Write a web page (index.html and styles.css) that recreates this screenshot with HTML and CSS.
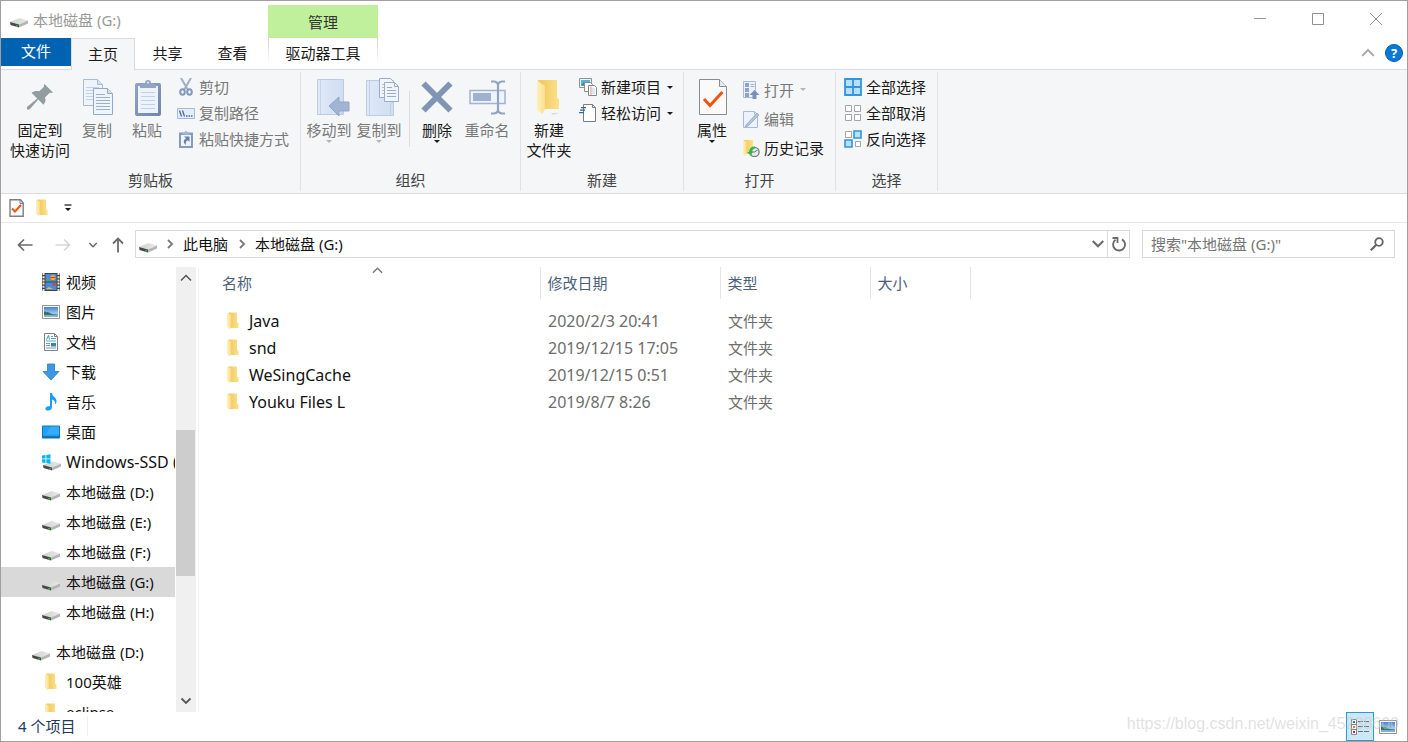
FILE: index.html
```html
<!DOCTYPE html>
<html lang="zh-CN">
<head>
<meta charset="utf-8">
<title>本地磁盘 (G:)</title>
<link rel="stylesheet" href="styles.css">
</head>
<body>
<svg class="defs" width="0" height="0" aria-hidden="true">
  <defs>
    <linearGradient id="gFolder" x1="0" x2="1"><stop offset="0" stop-color="#efc75c"/><stop offset="1" stop-color="#fde08a"/></linearGradient>
    <linearGradient id="gFlap" x1="0" x2="1"><stop offset="0" stop-color="#fff0ba"/><stop offset="1" stop-color="#fbdf90"/></linearGradient>
    <linearGradient id="gDrive" x1="0" x2="1"><stop offset="0" stop-color="#cfcfcf"/><stop offset="1" stop-color="#e9e9ea"/></linearGradient>
    <linearGradient id="gBlue" x1="0" x2="1"><stop offset="0" stop-color="#dfe9f8"/><stop offset="1" stop-color="#d0def2"/></linearGradient>
    <linearGradient id="gSky" x1="0" x2="0" y1="0" y2="1"><stop offset="0" stop-color="#3f83d8"/><stop offset="1" stop-color="#d8ecfa"/></linearGradient>
    <linearGradient id="gClip" x1="0" x2="1" y1="0" y2="1"><stop offset="0" stop-color="#8ea4ca"/><stop offset="1" stop-color="#7085ad"/></linearGradient>
  </defs>
  <symbol id="drive" viewBox="0 0 18 18">
    <path d="M0 10 9.500 6l8.500 2.500-9 4z" fill="url(#gDrive)"/>
    <path d="M9 12.500l9-4v3l-9 4z" fill="#b4b4b7"/>
    <path d="M0 10l9 2.500v3L.5 13z" fill="#474747"/>
    <path d="M6 13.600l2 .6" stroke="#2fc23a" stroke-width="1.400"/>
  </symbol>
  <symbol id="windrive" viewBox="0 0 20 18">
    <path d="M2 12l9.500-3.500L20 10.500l-9 4z" fill="url(#gDrive)"/>
    <path d="M11 14.500l9-4v3l-9 4z" fill="#b4b4b7"/>
    <path d="M2 12l9 2.500v3L2.500 15z" fill="#474747"/>
    <path d="M8 15.600l2 .6" stroke="#2fc23a" stroke-width="1.400"/>
    <path d="M1 2.500l3.500-.5v3.500H1zM5.300 1.900 9.500 1.300v4.200H5.300zM1 6.300h3.500V10L1 9.500zM5.300 6.300h4.200v4.400l-4.200-.6z" fill="#08b5ef"/>
  </symbol>
  <symbol id="folder" viewBox="0 0 14 18">
    <path d="M2.500.5h8.500v10l1.500 1v4.500H3z" fill="url(#gFolder)"/>
    <path d="M1 .5l3.800 2.200v12.500l-1.300 2L1 14.500z" fill="url(#gFlap)"/>
  </symbol>
  <symbol id="bigfolder" viewBox="0 0 26 36">
    <path d="M15 34h8l-6 2z" fill="#dcdcdc"/>
    <path d="M2 1h19v18l2 1.500V30H3z" fill="url(#gFolder)"/>
    <path d="M1 1.500 9 7v23l-2.500 5L1 31z" fill="url(#gFlap)"/>
  </symbol>
  <symbol id="check" viewBox="0 0 28 36">
    <path d="M.5.5h20l7 7v28H.5z" fill="#fafafa" stroke="#8b8b8b"/>
    <path d="M20.500.5v7h7" fill="#e9e9e9" stroke="#8b8b8b"/>
    <path d="M5 20l6 6.500L23.500 13" fill="none" stroke="#f0550e" stroke-width="3"/>
  </symbol>
  <symbol id="chk" viewBox="0 0 16 18">
    <path d="M1 .8h10.500L14.200 4v13.200H1z" fill="#fafafa" stroke="#7e7e7e" stroke-width="1.400"/>
    <path d="M11 1v3.500h3" fill="none" stroke="#7e7e7e"/>
    <path d="M3 9.500l3 3 6-6.500" fill="none" stroke="#f0550e" stroke-width="2"/>
  </symbol>
  <symbol id="pin" viewBox="0 0 26 26">
    <path d="M17.500 0l8.500 8.500-2.500.5-.8-.3L18 13.500c1 3 .3 5-1.500 7.200l-5.300-5.300L2.500 25.500H0V23l10.200-8.600L4.500 8.800c2.500-2 5-2.300 7.800-1.500L17 2.800l-.3-1z" fill="#929da2"/>
  </symbol>
  <symbol id="copy" viewBox="0 0 32 36">
    <g stroke="#a9bad7" fill="#eef4fc">
      <path d="M1.500.5h14l5 5v21h-19z"/><path d="M15.500.5v5h5" fill="#d5e1f3"/>
      <path d="M4 8.500h13M4 11.500h13M4 14.500h13M4 17.500h13M4 20.500h13" stroke="#c3d1e7"/>
      <path d="M11.500 9.500h14l5 5v21h-19z" stroke="#93a8cb"/><path d="M25.500 9.500v5h5" fill="#d5e1f3" stroke="#93a8cb"/>
      <path d="M14 15.500h9M14 18.500h14M14 21.500h14M14 24.500h14M14 27.500h14M14 30.500h14" stroke="#9aafd0"/>
    </g>
  </symbol>
  <symbol id="paste" viewBox="0 0 28 37">
    <rect x="1" y="4" width="26" height="33" rx="2" fill="url(#gClip)"/>
    <path d="M4 7h20v27H4z" fill="#edf3fc"/>
    <path d="M7 13.500h14M7 17.500h14M7 21.500h14M7 25.500h14M7 29.500h14" stroke="#bfcfe8"/>
    <path d="M6 9V6l4-2h1a3 3 0 0 1 6 0h1l4 2v3z" fill="#94a5c4"/><circle cx="14" cy="3.500" r="1" fill="#e8eef8"/>
  </symbol>
  <symbol id="cut" viewBox="0 0 18 18">
    <path d="M4 0l7 12M14 0 7 12" stroke="#9eafcb" stroke-width="2"/>
    <ellipse cx="5.500" cy="14" rx="2.300" ry="2.800" fill="none" stroke="#8398bd" stroke-width="2"/>
    <ellipse cx="12.500" cy="14" rx="2.300" ry="2.800" fill="none" stroke="#8398bd" stroke-width="2"/>
  </symbol>
  <symbol id="path" viewBox="0 0 18 18">
    <path d="M.5 4.500h17v10H.5z" fill="#e4edfa" stroke="#a5b9dc"/>
    <path d="M2.500 6.500l2 6M5.500 6.500l2 6" stroke="#4b689b" stroke-width="1.300"/>
    <path d="M9 12h1.500M11.500 12H13M14 12h1.500" stroke="#4b689b" stroke-width="1.500"/>
  </symbol>
  <symbol id="shortcut" viewBox="0 0 18 18">
    <path d="M2 2.500h14V18H2z" fill="#849abf"/><path d="M4 5h10v11H4z" fill="#f1f6fd"/>
    <path d="M5.500 4.500V2.500H7.500a1.500 1.500 0 0 1 3 0h2v2z" fill="#a4b5d2"/>
    <path d="M7 6.500h5.500V12l-1.800-1.800C9 11 8.500 12.500 9 15 6 13 6 10 9 8.500z" fill="#6680ad"/>
  </symbol>
  <symbol id="moveto" viewBox="0 0 34 37">
    <path d="M1.500.5h26v35h-26z" fill="url(#gBlue)" stroke="#bccbe3"/><path d="M4.500 1v34" stroke="#c6d5ec"/>
    <path d="M27.500 22v10c0 2-3 2-3 4" fill="none" stroke="#bccbe3"/>
    <path d="M13 27l10-9v5h10v9H23v5z" fill="#a2b4d3" stroke="#92a5c7"/>
  </symbol>
  <symbol id="copyto" viewBox="0 0 34 39">
    <path d="M.5 2.500h27v35h-27z" fill="url(#gBlue)" stroke="#bccbe3"/><path d="M3.500 3v34M24.500 37V26l3-2" fill="none" stroke="#c1d0e8"/>
    <g fill="#f0f5fd" stroke="#9aaccb"><path d="M13.500.5h11l3 3v16h-14z"/><path d="M16 6.500h9M16 9.500h9M16 12.500h9M16 15.500h9" stroke="#adbfdd"/>
    <path d="M18.500 4.500h10l4 4v15h-14z"/><path d="M28.500 4.500v4h4" fill="none"/><path d="M21 9.500h5M21 12.500h9M21 15.500h9M21 18.500h9"/></g>
  </symbol>
  <symbol id="delete" viewBox="0 0 32 32"><path d="M2.500 2.500l27 27M29.500 2.500l-27 27" stroke="#8194b6" stroke-width="6"/></symbol>
  <symbol id="rename" viewBox="0 0 37 35">
    <path d="M1 10.500h35v13H1z" fill="#eef4fd" stroke="#a1b3d2" stroke-width="1.500"/><path d="M4 13h18v8H4z" fill="#a0b1ce"/>
    <path d="M29 3v29M22 1.500h3q4 .5 4 4 0-3.500 4-4h3M22 33.500h3q4-.5 4-4 0 3.500 4 4h3" fill="none" stroke="#91a4c5" stroke-width="2.200"/>
  </symbol>
  <symbol id="newitem" viewBox="0 0 18 18">
    <path d="M.5.5h12v9H.5z" fill="#e9f7fc" stroke="#87969d"/><path d="M2 2h9v6H2z" fill="#5bb1da"/><path d="M2 7l3-3 3 4z" fill="#4b8a85"/>
    <path d="M5.500 4.500h6l2 2v7h-8z" fill="#fff" stroke="#8b8b8b"/>
    <path d="M9.500 7.500h6l2 2v8h-8z" fill="#fff" stroke="#858585"/><path d="M11 11h5M11 13h5M11 15h5" stroke="#b8ceea"/><path d="M12 8v9" stroke="#f2a9a2"/>
  </symbol>
  <symbol id="easy" viewBox="0 0 18 18">
    <path d="M4.500.5h9l3 3v14h-12z" fill="#fff" stroke="#7d7d7d"/><path d="M13.500.5v3h3" fill="none" stroke="#7d7d7d"/>
    <path d="M2 3.700h5M1 6.200h5M0 8.700h5" stroke="#276ca8" stroke-width="1.200"/>
  </symbol>
  <symbol id="open" viewBox="0 0 18 18">
    <path d="M1.500.5h12v16h-12z" fill="#eaf1fc" stroke="#a8bada"/><path d="M3 2h4v4H3zM3 7h4v4H3zM3 12h4v4H3z" fill="#8ea3c7"/><path d="M8.500 3.500h4M8.500 5.500h4" stroke="#a6b7d4"/>
    <path d="M12.500 9l5 5h-3v4h-4v-4h-3z" fill="#7990b9"/>
  </symbol>
  <symbol id="edit" viewBox="0 0 18 18">
    <path d="M1.500 1.500h11l3 3v13h-14z" fill="#ecf3fd" stroke="#a9bad8"/><path d="M12.500 1.500v3h3" fill="none" stroke="#a9bad8"/>
    <path d="M4 15 15 3l2 2L6 16l-3 1z" fill="#b4c4de" stroke="#899fc4" stroke-width=".7"/>
  </symbol>
  <symbol id="history" viewBox="0 0 18 18">
    <path d="M2 1h9v14H3z" fill="url(#gFolder)"/><path d="M1 1l3.500 2v11L3 17l-2-2z" fill="url(#gFlap)"/>
    <circle cx="12.500" cy="13" r="4.600" fill="#e6e9ea" stroke="#747b80" stroke-width="1.300"/><path d="M12.500 13l3-2M12.500 13h-3" stroke="#636c71"/>
    <path d="M13 7.500q-6 0-5.500 5.500H5l4 4 1.500-4q-1-2.500 2.500-3.500z" fill="#33b54a"/>
  </symbol>
  <symbol id="selall" viewBox="0 0 18 18"><path d="M1 1h16v16H1zM9 1v16M1 9h16" fill="#b6e0fc" stroke="#3295e0" stroke-width="1.800"/></symbol>
  <symbol id="selnone" viewBox="0 0 18 18"><path d="M1.500 1.500h6v6h-6zM10.500 1.500h6v6h-6zM1.500 10.500h6v6h-6zM10.500 10.500h6v6h-6z" fill="#fff" stroke="#a5a5a5"/></symbol>
  <symbol id="selinv" viewBox="0 0 18 18"><path d="M1.500 1.500h6v6h-6zM11.500 11.500h5v5h-5z" fill="#fff" stroke="#a5a5a5"/><path d="M10 1h7v7h-7zM1 10h7v7H1z" fill="#b6e0fc" stroke="#3295e0" stroke-width="1.600"/></symbol>
  <symbol id="video" viewBox="0 0 18 18">
    <path d="M0 0h18v18H0z" fill="#444"/><path d="M1.500 0v18M16.500 0v18" stroke="#e8e8e8" stroke-width="2" stroke-dasharray="2 1.200"/>
    <path d="M3.500 1h11v7.500h-11zM3.500 9.500h11V17h-11z" fill="#4c88dc"/><circle cx="11" cy="4.500" r="2.600" fill="#efb125"/><path d="M8.500 4.500h5" stroke="#c83d28"/><circle cx="6" cy="6.500" r="1.500" fill="#5da543"/><circle cx="12" cy="11.500" r="1.800" fill="#d64a2e"/><path d="M4 16l3-2 4 2z" fill="#e8bd31"/>
  </symbol>
  <symbol id="picture" viewBox="0 0 18 18">
    <path d="M.5 2.500h17v13H.5z" fill="#fff" stroke="#959595"/><path d="M2 4h14v10H2z" fill="url(#gSky)"/><path d="M2 8.500q5 0 8 2.500l6 .5v1H2z" fill="#3c725b"/><path d="M2 12h14v2H2z" fill="#7fb2d6"/>
  </symbol>
  <symbol id="doc" viewBox="0 0 18 18">
    <path d="M2.500.5h10l3 3v14h-13z" fill="#fff" stroke="#828282"/><path d="M12.500.5v3h3" fill="none" stroke="#828282"/>
    <path d="M4.500 6.500l2-4 1 4" fill="none" stroke="#2e9ad0"/><path d="M9 3.500h2M9 5.500h5M4 8h10M4 10.500h4M4 12.500h4M4 15h10" stroke="#57a6ce"/><path d="M9 10h5v3.500H9z" fill="#427f9f"/>
  </symbol>
  <symbol id="down" viewBox="0 0 18 18"><path d="M5.500 1h7v7.500H17L9 17 1 8.500h4.500z" fill="#3c97e5" stroke="#2978bd" stroke-width=".8"/></symbol>
  <symbol id="music" viewBox="0 0 18 18"><path d="M8 0h2c.3 4 4.500 4 4.500 8 0 1.500-.5 2.700-1.500 3.500.5-3-.5-4.200-3-5V14c0 2-1.500 3.500-3.800 3.500-4.200 0-3.700-5 1.800-4.300z" fill="#16a0f5"/></symbol>
  <symbol id="desktop" viewBox="0 0 18 18"><path d="M.5 3h17v12H.5z" fill="#1ea2fb" stroke="#1673b1"/><path d="M9 3.500h8v8H3z" fill="#46b3fc" opacity=".6"/><path d="M1 14h16" stroke="#0f588e" stroke-width="1.200"/></symbol>
  <symbol id="details" viewBox="0 0 18 16">
    <path d="M.5.5h5v15h-5zM.5 5.500h5M.5 10.500h5" fill="#fff" stroke="#858585"/><path d="M2 3h2" stroke="#33739e" stroke-width="2"/><path d="M2 8h2" stroke="#e07b34" stroke-width="2"/><path d="M2 13h2" stroke="#bf2c1c" stroke-width="2"/>
    <path d="M7 2.500h5M13 2.500h5M7 7.500h5M13 7.500h5M7 12.500h5M13 12.500h5" stroke="#707070"/>
  </symbol>
  <symbol id="chevdown" viewBox="0 0 12 12"><path d="M1.500 3.500 6 8l4.500-4.500" fill="none" stroke="currentColor" stroke-width="1.800"/></symbol>
  <symbol id="chevup" viewBox="0 0 12 12"><path d="M1 8.500l5-5 5 5" fill="none" stroke="currentColor" stroke-width="1.500"/></symbol>
  <symbol id="chevright" viewBox="0 0 12 12"><path d="M4 2l4 4-4 4" fill="none" stroke="currentColor" stroke-width="1.800"/></symbol>
  <symbol id="arrow" viewBox="0 0 16 14"><path d="M15.500 7H1.500M7 1.500 1.500 7 7 12.500" fill="none" stroke="currentColor" stroke-width="1.700"/></symbol>
</svg>

<div class="window">
  <header class="titlebar">
    <div class="caption"><svg class="i18 low"><use href="#drive"/></svg><h1 class="caption-text">本地磁盘 (G:)</h1></div>
    <div class="context">管理</div>
    <div class="controls">
      <button class="control" aria-label="最小化"><svg width="14" height="14"><path d="M1 6.500h12" stroke="#999"/></svg></button>
      <button class="control" aria-label="最大化"><svg width="14" height="14"><path d="M1.500 1.500h11v11h-11z" fill="none" stroke="#8f8f8f"/></svg></button>
      <button class="control" aria-label="关闭"><svg width="14" height="14"><path d="M1 1l12 12M13 1 1 13" stroke="#8f8f8f"/></svg></button>
    </div>
  </header>
  <nav class="tabs">
    <button class="tab tab-file">文件</button>
    <button class="tab tab-active">主页</button>
    <button class="tab">共享</button>
    <button class="tab">查看</button>
    <button class="tab tab-tools">驱动器工具</button>
    <div class="tabs-end">
      <button class="plain gray" aria-label="折叠功能区"><svg class="i14"><use href="#chevup"/></svg></button>
      <button class="help" aria-label="帮助">?</button>
    </div>
  </nav>

  <section class="ribbon">
    <div class="group g-clip">
      <div class="tools">
        <button class="big w-pin"><span class="pic"><svg width="26" height="26"><use href="#pin"/></svg></span>固定到<br>快速访问</button>
        <button class="big w-two off"><span class="pic pic-right"><svg width="32" height="36"><use href="#copy"/></svg></span>复制</button>
        <button class="big w-two off"><span class="pic pic-right"><svg width="28" height="37"><use href="#paste"/></svg></span>粘贴</button>
        <div class="stack">
          <button class="small off"><svg class="i18"><use href="#cut"/></svg>剪切</button>
          <button class="small off"><svg class="i18"><use href="#path"/></svg>复制路径</button>
          <button class="small off"><svg class="i18"><use href="#shortcut"/></svg>粘贴快捷方式</button>
        </div>
      </div>
      <h2 class="group-name">剪贴板</h2>
    </div>
    <div class="group g-org">
      <div class="tools">
        <button class="big w-three off"><span class="pic pic-far"><svg width="34" height="37"><use href="#moveto"/></svg></span>移动到<i class="caret"></i></button>
        <button class="big w-three off"><span class="pic pic-far"><svg width="34" height="39"><use href="#copyto"/></svg></span>复制到<i class="caret"></i></button>
        <span class="rule"></span>
        <button class="big w-two"><span class="pic"><svg width="32" height="32"><use href="#delete"/></svg></span>删除<i class="caret"></i></button>
        <button class="big w-three off"><span class="pic"><svg width="37" height="35"><use href="#rename"/></svg></span>重命名</button>
      </div>
      <h2 class="group-name">组织</h2>
    </div>
    <div class="group g-new">
      <div class="tools">
        <button class="big w-three"><span class="pic"><svg width="26" height="36"><use href="#bigfolder"/></svg></span>新建<br>文件夹</button>
        <div class="stack">
          <button class="small"><svg class="i18"><use href="#newitem"/></svg>新建项目<i class="caret"></i></button>
          <button class="small"><svg class="i18"><use href="#easy"/></svg>轻松访问<i class="caret"></i></button>
        </div>
      </div>
      <h2 class="group-name">新建</h2>
    </div>
    <div class="group g-open">
      <div class="tools">
        <button class="big w-two"><span class="pic pic-right"><svg width="28" height="36"><use href="#check"/></svg></span>属性<i class="caret"></i></button>
        <div class="stack stack-loose">
          <button class="small off"><svg class="i18"><use href="#open"/></svg>打开<i class="caret"></i></button>
          <button class="small off"><svg class="i18"><use href="#edit"/></svg>编辑</button>
          <button class="small"><svg class="i18"><use href="#history"/></svg>历史记录</button>
        </div>
      </div>
      <h2 class="group-name">打开</h2>
    </div>
    <div class="group g-select">
      <div class="tools">
        <div class="stack">
          <button class="small"><svg class="i18"><use href="#selall"/></svg>全部选择</button>
          <button class="small"><svg class="i18"><use href="#selnone"/></svg>全部取消</button>
          <button class="small"><svg class="i18"><use href="#selinv"/></svg>反向选择</button>
        </div>
      </div>
      <h2 class="group-name">选择</h2>
    </div>
  </section>

  <div class="quick">
    <button class="plain" aria-label="属性"><svg width="16" height="18"><use href="#chk"/></svg></button>
    <button class="plain" aria-label="新建文件夹"><svg width="14" height="18"><use href="#folder"/></svg></button>
    <button class="plain" aria-label="自定义快速访问工具栏"><svg width="8" height="8"><path d="M.5 1h7" stroke="#111" stroke-width="1.200"/><path d="M1 4h6L4 7z" fill="#111"/></svg></button>
  </div>

  <div class="address-row">
    <div class="history">
      <button class="plain dark" aria-label="后退"><svg width="16" height="14"><use href="#arrow"/></svg></button>
      <button class="plain pale flip" aria-label="前进"><svg width="16" height="14"><use href="#arrow"/></svg></button>
      <button class="plain dark" aria-label="最近位置"><svg width="10" height="10"><use href="#chevdown"/></svg></button>
      <button class="plain dark" aria-label="上移"><svg width="12" height="16" viewBox="0 0 12 16"><path d="M6 15.500V1.500M1 6.500l5-5 5 5" fill="none" stroke="currentColor" stroke-width="1.800"/></svg></button>
    </div>
    <div class="address">
      <svg class="i18 low"><use href="#drive"/></svg>
      <svg class="i12 sep"><use href="#chevright"/></svg>
      <a class="crumb" href="#pc">此电脑</a>
      <svg class="i12 sep"><use href="#chevright"/></svg>
      <a class="crumb" href="#g">本地磁盘 (G:)</a>
      <div class="address-end">
        <button class="plain dark drop" aria-label="展开"><svg class="i14"><use href="#chevdown"/></svg></button>
        <button class="plain dark refresh" aria-label="刷新"><svg width="16" height="16" viewBox="0 0 16 16"><path d="M11 3.300a6 6 0 1 1-6.500.4" fill="none" stroke="currentColor" stroke-width="1.900"/><path d="M1.500 2h5v5" fill="none" stroke="currentColor" stroke-width="1.800"/></svg></button>
      </div>
    </div>
    <div class="search">
      <input class="search-input" type="text" aria-label="搜索" placeholder="搜索&quot;本地磁盘 (G:)&quot;">
      <svg width="14" height="14" viewBox="0 0 14 14"><circle cx="9" cy="5" r="3.800" fill="none" stroke="#666" stroke-width="1.800"/><path d="M6.300 7.700.8 13.200" stroke="#666" stroke-width="2.200"/></svg>
    </div>
  </div>

  <main class="main">
    <nav class="tree">
      <a class="node" href="#v"><svg class="i18"><use href="#video"/></svg>视频</a>
      <a class="node" href="#p"><svg class="i18"><use href="#picture"/></svg>图片</a>
      <a class="node" href="#d"><svg class="i18"><use href="#doc"/></svg>文档</a>
      <a class="node" href="#w"><svg class="i18"><use href="#down"/></svg>下载</a>
      <a class="node" href="#m"><svg class="i18"><use href="#music"/></svg>音乐</a>
      <a class="node" href="#t"><svg class="i18"><use href="#desktop"/></svg>桌面</a>
      <a class="node node-latin" href="#c"><svg width="20" height="18"><use href="#windrive"/></svg>Windows-SSD (C:)</a>
      <a class="node" href="#dd"><svg class="i18 low"><use href="#drive"/></svg>本地磁盘 (D:)</a>
      <a class="node" href="#e"><svg class="i18 low"><use href="#drive"/></svg>本地磁盘 (E:)</a>
      <a class="node" href="#f"><svg class="i18 low"><use href="#drive"/></svg>本地磁盘 (F:)</a>
      <a class="node node-current" href="#g"><svg class="i18 low"><use href="#drive"/></svg>本地磁盘 (G:)</a>
      <a class="node" href="#h"><svg class="i18 low"><use href="#drive"/></svg>本地磁盘 (H:)</a>
      <a class="node node-root" href="#d2"><svg class="i18 low"><use href="#drive"/></svg>本地磁盘 (D:)</a>
      <a class="node" href="#100"><svg class="i18"><use href="#folder"/></svg>100英雄</a>
      <a class="node" href="#ec"><svg class="i18"><use href="#folder"/></svg>eclipse</a>
    </nav>
    <div class="scroll">
      <svg class="i12"><use href="#chevup"/></svg>
      <div class="track"><div class="thumb"></div></div>
      <svg class="i12"><use href="#chevdown"/></svg>
    </div>
    <div class="files">
      <table class="list">
        <colgroup><col class="c-name"><col class="c-date"><col class="c-type"><col class="c-size"><col></colgroup>
        <thead><tr>
          <th>名称<svg class="sort" width="11" height="11"><use href="#chevup"/></svg></th><th>修改日期</th><th>类型</th><th>大小</th><td></td>
        </tr></thead>
        <tbody>
          <tr><td><span class="file"><svg width="14" height="18"><use href="#folder"/></svg>Java</span></td><td class="date">2020/2/3 20:41</td><td>文件夹</td><td></td><td></td></tr>
          <tr><td><span class="file"><svg width="14" height="18"><use href="#folder"/></svg>snd</span></td><td class="date">2019/12/15 17:05</td><td>文件夹</td><td></td><td></td></tr>
          <tr><td><span class="file"><svg width="14" height="18"><use href="#folder"/></svg>WeSingCache</span></td><td class="date">2019/12/15 0:51</td><td>文件夹</td><td></td><td></td></tr>
          <tr><td><span class="file"><svg width="14" height="18"><use href="#folder"/></svg>Youku Files L</span></td><td class="date">2019/8/7 8:26</td><td>文件夹</td><td></td><td></td></tr>
        </tbody>
      </table>
    </div>
  </main>

  <footer class="status">
    <span class="count">4 个项目</span>
    <div class="views">
      <button class="view view-on" aria-label="详细信息"><svg width="18" height="16"><use href="#details"/></svg></button>
      <button class="view" aria-label="大图标"><svg class="i18"><use href="#picture"/></svg></button>
    </div>
    <span class="mark">https://blog.csdn.net/weixin_45238600</span>
  </footer>
</div>
</body>
</html>
```

FILE: styles.css
```css
* { box-sizing: border-box; }
body {
  margin: 0;
  background: #fff;
  color: #1a1a1a;
  font: 15px/20px "Noto Sans", "Noto Sans CJK SC", sans-serif;
}
button, input { font: inherit; color: inherit; border: 0; background: none; padding: 0; margin: 0; }
a { color: inherit; text-decoration: none; }
h1, h2 { margin: 0; font-size: inherit; font-weight: 400; }
svg { display: block; flex: none; }
.defs { position: absolute; }
.i18 { width: 18px; height: 18px; }
.i14 { width: 14px; height: 14px; }
.i12 { width: 12px; height: 12px; }
.plain { display: flex; align-items: center; justify-content: center; }
.gray { color: #a3a3a3; }
.dark { color: #6b6b6b; }
.pale { color: #d6d6d6; }
.flip { transform: scaleX(-1); }
.low { margin-top: 3px; }

.window { display: flex; flex-direction: column; height: 100vh; border: 1px solid #a0a0a0; }

.titlebar { display: flex; height: 37px; flex: none; }
.caption { display: flex; align-items: center; gap: 5px; width: 267px; padding-left: 9px; color: #999; }
.context { width: 110px; margin-top: 4px; background: #c0f09c; display: flex; align-items: center; justify-content: center; color: #333; }
.controls { display: flex; margin-left: auto; padding: 0 2px 2px 0; }
.control { width: 58px; display: flex; align-items: center; justify-content: center; }

.tabs { display: flex; height: 32px; flex: none; border-bottom: 1px solid #dadbdc; }
.tab { width: 65px; padding-bottom: 2px; }
.tab-file { width: 70px; height: 28px; background: #0063b1; color: #fff; }
.tab-active { width: 64px; height: 32px; border: 1px solid #dadbdc; border-bottom: 0; background: #f5f6f7; }
.tab-tools { width: 110px; margin-left: 3px; border: 1px solid; border-width: 0 1px; border-image: linear-gradient(#cfcfcf, #fff 80%) 1; }
.tabs-end { display: flex; align-items: center; gap: 10px; margin-left: auto; padding: 0 4px 2px 0; }
.help { width: 18px; height: 18px; border-radius: 50%; background: #0a78d7; border: 1px solid #075fab; color: #fff; font-size: 13px; line-height: 16px; font-weight: 700; }

.ribbon { display: flex; flex: none; height: 124px; padding: 2px 0; background: #f5f6f7; border-bottom: 1px solid #dadbdc; }
.group { display: flex; flex-direction: column; justify-content: space-between; border-right: 1px solid #e1e2e3; }
.g-clip { width: 300px; }
.g-org { width: 220px; }
.g-new { width: 163px; }
.g-open { width: 152px; }
.g-select { width: 102px; }
.tools { display: flex; padding-left: 3px; }
.g-clip .tools { padding-left: 4px; }
.group-name { padding-bottom: 1px; color: #444; text-align: center; }
.big { align-self: flex-start; text-align: center; white-space: nowrap; }
.pic { display: flex; align-items: center; justify-content: center; height: 48px; padding-top: 2px; }
.pic-right { padding-left: 2px; }
.pic-far { padding-left: 8px; }
.w-pin { width: 70px; }
.w-two { width: 50px; }
.w-three { width: 50px; }
.w-pin + .w-two { margin-left: -3px; }
.off { color: #787878; }
.stack { display: flex; flex-direction: column; padding: 2px 0 0 5px; }
.small { display: flex; align-items: center; gap: 4px; height: 26px; white-space: nowrap; }
.stack-loose { padding-top: 3px; }
.stack-loose .small { height: 29px; }
.caret { width: 0; height: 0; border: 3px solid transparent; border-top-color: currentColor; border-bottom: 0; }
.off .caret { border-top-color: #b4b4b4; }
.big .caret { display: block; margin: 0 auto; }
.small .caret { margin-left: 2px; }
.rule { width: 1px; margin: 19px 2px 0 5px; height: 56px; background: #dcdddf; }

.quick { display: flex; align-items: center; gap: 10px; height: 29px; flex: none; padding-left: 8px; border-bottom: 1px solid #e8e8e8; }
.quick .plain:last-child { margin-left: 5px; }

.address-row { display: flex; flex: none; height: 44px; padding: 7px 12px 9px 16px; }
.history { display: flex; align-items: center; width: 118px; padding-top: 1px; }
.history .plain { margin-right: 17px; }
.history .plain:nth-child(1) { margin-right: 22px; }
.history .plain:nth-child(4) { margin: 0 0 0 -3px; }
.address { flex: 1; display: flex; align-items: center; border: 1px solid #d9d9d9; padding-left: 3px; color: #111; }
.sep { margin: 0 7px; color: #777; }
.crumb { padding-bottom: 1px; }
.crumb + .sep { margin-left: 8px; }
.address-end { display: flex; align-self: stretch; margin-left: auto; }
.drop { width: 20px; border-right: 1px solid #d9d9d9; }
.refresh { width: 21px; }
.search { display: flex; align-items: center; width: 253px; margin-left: 12px; padding: 0 10px 0 8px; border: 1px solid #d9d9d9; }
.search-input { flex: 1; min-width: 0; outline: 0; }
.search-input::placeholder { color: #757575; opacity: 1; }

.main { display: flex; flex: 1; min-height: 0; }
.tree { width: 174px; overflow: hidden; color: #111; }
.node { display: flex; align-items: center; gap: 6px; height: 30px; padding-left: 41px; white-space: nowrap; }
.node-latin { gap: 5px; padding-left: 40px; font-size: 16px; }
.node-current { background: #d9d9d9; }
.node-root { margin-top: 10px; padding-left: 31px; }
.scroll { display: flex; flex-direction: column; align-items: center; width: 20px; margin: 0 2px 0 1px; padding: 5px 0; background: #f0f0f0; color: #555; }
.track { flex: 1; align-self: stretch; padding: 146px 1px 0 0; }
.thumb { height: 146px; background: #cdcdcd; }
.files { flex: 1; min-width: 0; border-left: 1px solid #f3f3f3; }
.list { width: 100%; table-layout: fixed; border-collapse: collapse; color: #6d6d6d; }
.c-name { width: 341px; }
.c-date { width: 180px; }
.c-type { width: 150px; }
.c-size { width: 100px; }
.list th { position: relative; height: 32px; padding: 0 8px 0 7px; text-align: left; font-weight: 400; color: #4c607a; border-right: 1px solid #e5e5e5; }
.list th:first-child { padding-left: 23px; }
.sort { position: absolute; left: 173px; top: -2px; color: #777; }
.list tbody::before { content: ""; display: block; height: 8px; }
.list tbody td { height: 27px; padding: 0 8px; }
.list tbody td:first-child { padding-left: 27px; }
.file { display: flex; align-items: center; gap: 9px; color: #111; font-size: 16px; }
.list .date { font-size: 16px; }

.status { position: relative; display: flex; align-items: center; flex: none; height: 29px; color: #1e395b; }
.count { padding: 0 12px 0 17px; margin-bottom: 2px; border-right: 1px solid #f0f0f0; }
.views { display: flex; align-self: stretch; margin-left: auto; padding-right: 5px; }
.view { display: flex; align-items: center; justify-content: center; width: 28px; }
.view-on { background: #cce8f7; border: 1px solid #2a9bda; }
.mark { position: absolute; right: 8px; top: 2px; font: 16px/20px "Liberation Sans", sans-serif; color: rgba(200, 200, 200, .55); pointer-events: none; }
```
